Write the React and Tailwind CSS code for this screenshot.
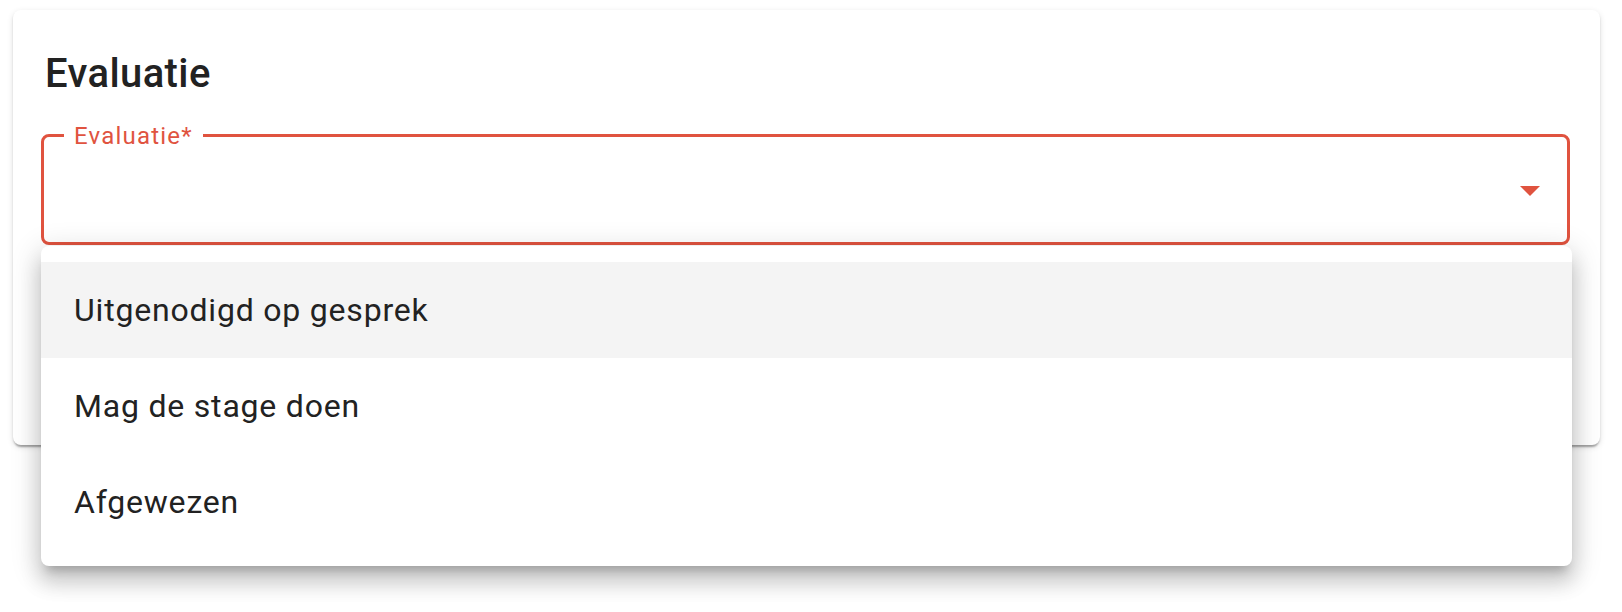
import React from "react";

const options = ["Uitgenodigd op gesprek", "Mag de stage doen", "Afgewezen"];

const App = () => {
  return (
    <div className="w-[1622px] h-[612px] bg-white pl-[13px] pt-[10px] overflow-hidden font-['Roboto',sans-serif]">
      <div className="w-[1587px] h-[435px] bg-white rounded-[8px] pl-[28px] pr-[30px] pt-[32px] shadow-[0_4px_2px_-2px_rgba(0,0,0,0.2),0_2px_2px_0_rgba(0,0,0,0.14),0_2px_6px_0_rgba(0,0,0,0.12)]">
        <h2 className="ml-[4px] text-[40px] leading-[64px] font-medium text-[#222] tracking-[0.4px]">Evaluatie</h2>

        <div className="relative mt-[28px]">
          <div className="h-[111px] border-[3px] border-[#e0533f] rounded-[8px] flex items-center justify-end pr-[27px] pt-[3px]">
            <svg width="20" height="10" viewBox="0 0 20 10" className="fill-[#e0533f]">
              <path d="M0 0h20L10 10z" />
            </svg>
          </div>
          <span className="absolute left-[23px] top-[-10px] bg-white px-[10px] text-[24px] leading-[24px] tracking-[1.2px] text-[#e0533f]">
            Evaluatie*
          </span>

          <ul className="absolute left-0 top-[112px] w-[1531px] bg-white rounded-[8px] py-[16px] z-10 shadow-[0_10px_10px_-6px_rgba(0,0,0,0.2),0_16px_20px_2px_rgba(0,0,0,0.14),0_6px_28px_5px_rgba(0,0,0,0.12)]">
            {options.map((o, i) => (
              <li
                key={o}
                className={
                  "h-[96px] flex items-center pl-[33px] text-[32px] leading-[48px] tracking-[0.8px] text-[#222] " +
                  (i === 0 ? "bg-[#f4f4f4]" : "bg-white")
                }
              >
                {o}
              </li>
            ))}
          </ul>
        </div>
      </div>
    </div>
  );
};

export default App;
